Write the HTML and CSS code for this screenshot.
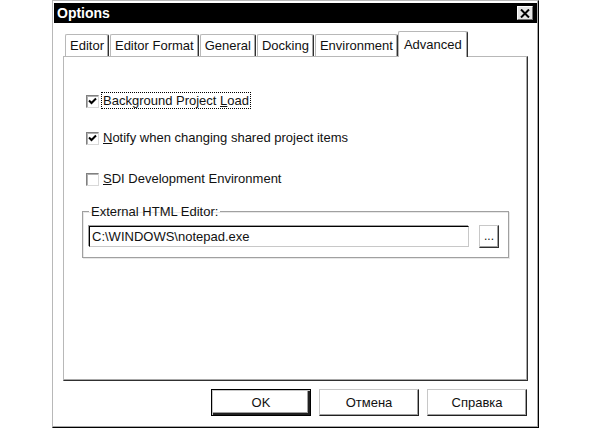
FILE: index.html
```html
<!DOCTYPE html>
<html>
<head>
<meta charset="utf-8">
<link rel="stylesheet" href="styles.css">
</head>
<body>
<div class="dialog">
  <div class="titlebar">
    <span class="title">Options</span>
    <span class="close"><svg width="10" height="9" viewBox="0 0 10 9"><path d="M1 0.5 L9 8.5 M9 0.5 L1 8.5" stroke="#000" stroke-width="2"/></svg></span>
  </div>
  <div class="body">
    <div class="tabs">
      <div class="tab">Editor</div>
      <div class="tab">Editor Format</div>
      <div class="tab">General</div>
      <div class="tab">Docking</div>
      <div class="tab">Environment</div>
      <div class="tab selected">Advanced</div>
    </div>
    <div class="panel">
      <div class="check row1">
        <span class="box"><svg width="11" height="11" viewBox="0 0 11 11"><path d="M2 4.5 L4.5 7 L9 2.5" fill="none" stroke="#000" stroke-width="2"/></svg></span>
        <span class="label focus">Background Project <u>L</u>oad</span>
      </div>
      <div class="check row2">
        <span class="box"><svg width="11" height="11" viewBox="0 0 11 11"><path d="M2 4.5 L4.5 7 L9 2.5" fill="none" stroke="#000" stroke-width="2"/></svg></span>
        <span class="label"><u>N</u>otify when changing shared project items</span>
      </div>
      <div class="check row3">
        <span class="box"></span>
        <span class="label"><u>S</u>DI Development Environment</span>
      </div>
      <fieldset class="group">
        <legend>External HTML Editor:</legend>
        <div class="pathrow">
          <div class="input">C:\WINDOWS\notepad.exe</div>
          <div class="browse">...</div>
        </div>
      </fieldset>
    </div>
    <div class="buttons">
      <div class="btn default">OK</div>
      <div class="btn">Отмена</div>
      <div class="btn">Справка</div>
    </div>
  </div>
</div>
</body>
</html>
```
FILE: styles.css
```css
html, body {
  margin: 0;
  padding: 0;
  background: #fff;
}
body {
  font-family: "Liberation Sans", Arial, sans-serif;
  font-size: 13px;
  color: #111;
}
.dialog {
  margin-left: 52px;
  width: 487px;
  height: 428px;
  box-sizing: border-box;
  border-left: 1px solid #b8b8b8;
  border-top: 1px solid #b8b8b8;
  border-right: 1px solid #000;
  border-bottom: 1px solid #000;
  box-shadow: inset -1px -1px 0 #a8a8a8;
  padding: 2px 1px 0 1px;
  display: flex;
  flex-direction: column;
}
.titlebar {
  height: 20px;
  background: #000;
  display: flex;
  align-items: center;
  justify-content: space-between;
  padding: 0 4px 0 3px;
}
.title {
  color: #fff;
  font-weight: bold;
  font-size: 14px;
}
.close {
  width: 16px;
  height: 14px;
  box-sizing: border-box;
  background: #e4e4e4;
  border-top: 1px solid #fff;
  border-left: 1px solid #fff;
  border-right: 1px solid #707070;
  border-bottom: 1px solid #707070;
  display: flex;
  align-items: center;
  justify-content: center;
}
.body {
  padding: 8px 9px 0 9px;
  display: flex;
  flex-direction: column;
}
.tabs {
  height: 25px;
  display: flex;
  align-items: flex-end;
  padding-left: 2px;
  position: relative;
  z-index: 1;
}
.tab {
  height: 22px;
  box-sizing: border-box;
  padding: 0 4px 0 4px;
  border-top: 1px solid #b8b8b8;
  border-left: 1px solid #b8b8b8;
  border-right: 1px solid #303030;
  box-shadow: inset -1px 0 0 #a8a8a8;
  border-radius: 2px 2px 0 0;
  display: flex;
  align-items: center;
  background: #fff;
  margin-right: 1px;
}
.tab.selected {
  height: 26px;
  margin-bottom: -1px;
  margin-left: -1px;
  padding: 0 5px 1px 5px;
}
.panel {
  height: 325px;
  box-sizing: border-box;
  border-top: 1px solid #b8b8b8;
  border-left: 1px solid #b8b8b8;
  border-right: 1px solid #303030;
  border-bottom: 1px solid #303030;
  box-shadow: inset -1px -1px 0 #a8a8a8;
  padding: 35px 18px 0 18px;
  display: flex;
  flex-direction: column;
}
.check {
  display: flex;
  align-items: center;
  height: 17px;
  margin-left: 4px;
}
.row2 { margin-top: 20px; }
.row3 { margin-top: 24px; }
.box {
  width: 13px;
  height: 13px;
  box-sizing: border-box;
  border-top: 1px solid #808080;
  border-left: 1px solid #808080;
  border-right: 1px solid #d8d8d8;
  border-bottom: 1px solid #d8d8d8;
  box-shadow: inset 1px 1px 0 #b0b0b0;
  background: #fff;
  margin-right: 2px;
  margin-top: 1px;
  display: flex;
}
.label {
  padding: 0 1px;
  line-height: 15px;
  border: 1px solid transparent;
}
.label.focus {
  border: 1px dotted #000;
}
.group {
  margin: 17px 0 0 0;
  border: 1px solid #a0a0a0;
  box-shadow: 1px 1px 0 #e8e8e8, inset 1px 1px 0 #e8e8e8;
  padding: 0 9px 9px 6px;
  min-width: 0;
}
.group legend {
  padding: 0 2px;
  margin-left: 0;
  line-height: 15px;
}
.pathrow {
  margin-top: 6px;
  display: flex;
  align-items: center;
  gap: 10px;
}
.input {
  flex: 1;
  height: 21px;
  box-sizing: border-box;
  border-top: 1px solid #000;
  border-left: 1px solid #000;
  border-right: 1px solid #c8c8c8;
  border-bottom: 1px solid #c8c8c8;
  box-shadow: -1px -1px 0 #a0a0a0;
  padding-left: 2px;
  display: flex;
  align-items: center;
  background: #fff;
}
.browse {
  width: 20px;
  height: 23px;
  box-sizing: border-box;
  border-top: 1px solid #c8c8c8;
  border-left: 1px solid #c8c8c8;
  border-right: 1px solid #303030;
  border-bottom: 1px solid #303030;
  box-shadow: inset -1px -1px 0 #a0a0a0;
  display: flex;
  align-items: center;
  justify-content: center;
  font-size: 12px;
  padding-bottom: 2px;
}
.buttons {
  margin-top: 8px;
  display: flex;
  justify-content: flex-end;
  gap: 8px;
  padding-right: 1px;
}
.btn {
  width: 100px;
  height: 27px;
  box-sizing: border-box;
  border-top: 1px solid #c8c8c8;
  border-left: 1px solid #c8c8c8;
  border-right: 1px solid #202020;
  border-bottom: 1px solid #202020;
  box-shadow: inset -1px -1px 0 #a0a0a0;
  display: flex;
  align-items: center;
  justify-content: center;
}
.btn.default {
  border: 1px solid #000;
  box-shadow: inset 1px 1px 0 #c8c8c8, inset -2px -2px 0 #202020, inset -3px -3px 0 #a0a0a0;
}
```
